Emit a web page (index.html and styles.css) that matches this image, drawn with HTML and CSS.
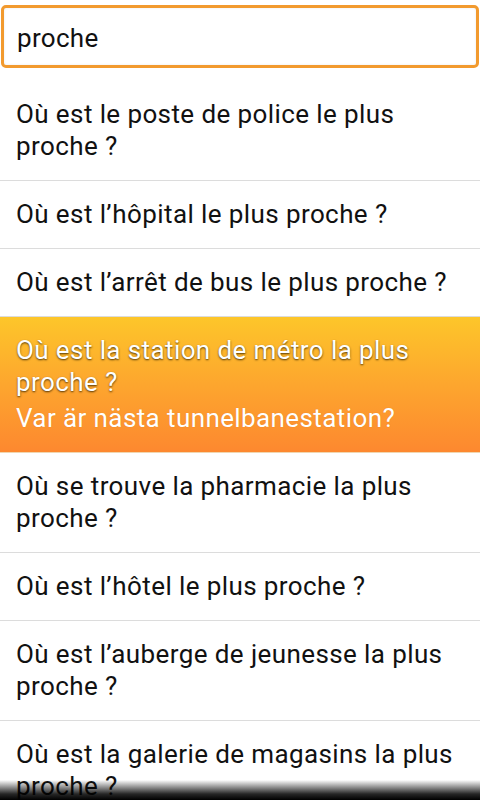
FILE: index.html
```html
<!DOCTYPE html>
<html lang="fr">
<head>
<meta charset="utf-8">
<title>Recherche</title>
<link rel="stylesheet" href="styles.css">
</head>
<body>
<div class="screen">
  <div class="search-wrap">
    <div class="search">proche</div>
  </div>
  <ul class="list">
    <li class="row">Où est le poste de police le plus<br>proche ?</li>
    <li class="row">Où est l’hôpital le plus proche ?</li>
    <li class="row">Où est l’arrêt de bus le plus proche ?</li>
    <li class="row active">
      <span class="fr">Où est la station de métro la plus<br>proche ?</span>
      <span class="sv">Var är nästa tunnelbanestation?</span>
    </li>
    <li class="row">Où se trouve la pharmacie la plus<br>proche ?</li>
    <li class="row">Où est l’hôtel le plus proche ?</li>
    <li class="row">Où est l’auberge de jeunesse la plus<br>proche ?</li>
    <li class="row">Où est la galerie de magasins la plus<br>proche ?</li>
  </ul>
  <div class="fade"></div>
</div>
</body>
</html>
```

FILE: styles.css
```css
html, body {
  margin: 0;
  padding: 0;
  background: #ffffff;
}
body {
  font-family: Roboto, "Liberation Sans", sans-serif;
  color: #111111;
}
.screen {
  position: relative;
  width: 480px;
  height: 800px;
  overflow: hidden;
  background: #ffffff;
}
.search-wrap {
  padding: 5px 1px 0 1px;
}
.search {
  height: 57px;
  border: 3px solid #f29a2e;
  border-radius: 5px;
  box-sizing: content-box;
  font-size: 26px;
  line-height: 60px;
  overflow: hidden;
  letter-spacing: 0.3px;
  padding: 0 13px;
  color: #111111;
  background: #ffffff;
  box-shadow: inset 0 0 3px rgba(0,0,0,0.08);
}
.list {
  list-style: none;
  margin: 0;
  padding: 0;
}
.row {
  font-size: 26px;
  letter-spacing: 0.4px;
  line-height: 32px;
  white-space: nowrap;
  padding: 17px 0 18px 16px;
  border-bottom: 1px solid #dcdcdc;
}
.row:first-child {
  padding-top: 30px;
}
.row.active {
  display: flex;
  flex-direction: column;
  background: linear-gradient(to bottom, #fdc62a 0%, #fda62e 50%, #fd882f 100%);
  color: #ffffff;
  border-bottom-color: #f0d6b0;
  padding-bottom: 18px;
}
.row.active .fr {
  text-shadow: 0 1px 2px rgba(60,40,0,0.9);
}
.row.active .sv {
  margin-top: 4px;
  text-shadow: 0 0 1px rgba(160,80,0,0.35);
}
.fade {
  position: absolute;
  left: 0;
  right: 0;
  bottom: 0;
  height: 20px;
  background: linear-gradient(to bottom, rgba(0,0,0,0) 0%, rgba(0,0,0,0.85) 70%, #000 100%);
}
```
